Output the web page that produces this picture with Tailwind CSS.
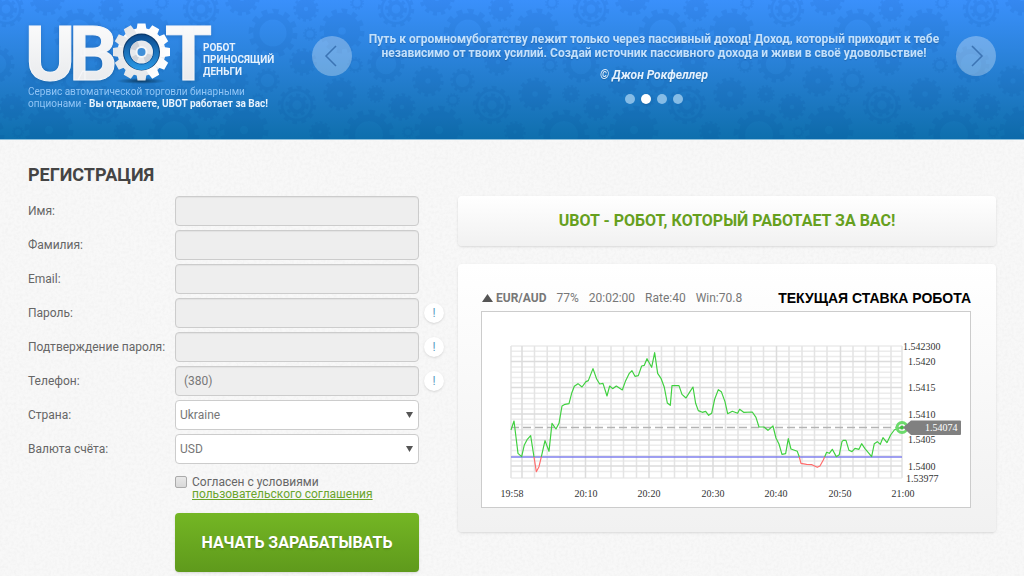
<!DOCTYPE html>
<html lang="ru">
<head>
<meta charset="utf-8">
<meta name="viewport" content="width=device-width, initial-scale=1">
<title>UBOT</title>
<script src="https://cdn.jsdelivr.net/npm/@tailwindcss/browser@4"></script>
</head>
<body class="relative min-h-screen overflow-x-hidden bg-[#f8f8f8] font-['Roboto','Noto_Sans',sans-serif] text-xs text-[#666]">

<!-- Paper texture -->
<svg class="absolute inset-0 -z-10 h-full w-full" aria-hidden="true">
  <filter id="paper"><feTurbulence type="fractalNoise" baseFrequency=".35" numOctaves="3" seed="4"/><feColorMatrix values="0 0 0 0 0.4  0 0 0 0 0.4  0 0 0 0 0.4  .14 0 0 0 -.05"/></filter>
  <rect width="100%" height="100%" filter="url(#paper)"/>
</svg>

<header class="relative flex h-[140px] items-start overflow-hidden border-b border-[#8fc0dc] bg-linear-to-b from-[#3a90fb] to-[#0e6fad] px-7 pt-5">
  <svg class="absolute top-0 left-0 h-[139px] w-[2145px]" viewBox="0 0 2145 139" aria-hidden="true">
    <defs>
      <symbol id="g-solid" viewBox="-12 -12 24 24"><path fill="#083f8c" fill-rule="evenodd" d="M-9.500 0a9.500 9.500 0 1 0 19 0a9.500 9.500 0 1 0-19 0zM-2 0a2 2 0 1 0 4 0a2 2 0 1 0-4 0z"/><circle r="10.500" fill="none" stroke="#083f8c" stroke-width="2.400" pathLength="24" stroke-dasharray="1"/></symbol>
      <symbol id="g-ring" viewBox="-12 -12 24 24"><circle r="8" fill="none" stroke="#083f8c" stroke-width="3"/><circle r="10.500" fill="none" stroke="#083f8c" stroke-width="2.400" pathLength="24" stroke-dasharray="1"/></symbol>
      <symbol id="g-double" viewBox="-12 -12 24 24"><circle r="9" fill="none" stroke="#083f8c" stroke-width="1.600"/><circle r="4" fill="none" stroke="#083f8c" stroke-width="2.400"/><circle r="6" fill="none" stroke="#083f8c" stroke-width="1.800" pathLength="16" stroke-dasharray="1"/><circle r="10.500" fill="none" stroke="#083f8c" stroke-width="2" pathLength="24" stroke-dasharray="1"/></symbol>
      <g id="gears">
        <use href="#g-double" x="377" y="-10" width="38" height="38"/>
        <use href="#g-double" x="472" y="85" width="40" height="40"/>
        <use href="#g-solid" x="293" y="-4" width="26" height="26"/>
        <use href="#g-solid" x="319" y="8" width="46" height="46"/>
        <use href="#g-solid" x="419" y="-20" width="36" height="36"/>
        <use href="#g-ring" x="443" y="8" width="50" height="50"/>
        <use href="#g-ring" x="303" y="27" width="14" height="14"/>
        <use href="#g-ring" x="367" y="45" width="38" height="38"/>
        <use href="#g-solid" x="412" y="65" width="32" height="32"/>
        <use href="#g-ring" x="450" y="68" width="25" height="25"/>
        <use href="#g-ring" x="347" y="57" width="16" height="16"/>
        <use href="#g-ring" x="446" y="93" width="14" height="14"/>
        <use href="#g-solid" x="323" y="77" width="34" height="34"/>
        <use href="#g-solid" x="367" y="85" width="18" height="18"/>
        <use href="#g-solid" x="388" y="93" width="28" height="28"/>
        <use href="#g-ring" x="343" y="109" width="52" height="52"/>
        <use href="#g-solid" x="414" y="105" width="50" height="50"/>
        <use href="#g-ring" x="402" y="126" width="12" height="12"/>
        <use href="#g-solid" x="309" y="121" width="22" height="22"/>
        <use href="#g-ring" x="350" y="-4" width="14" height="14"/>
        <use href="#g-solid" x="484" y="48" width="28" height="28"/>
      </g>
    </defs>
    <g opacity=".09">
      <use href="#gears" x="-390"/><use href="#gears" x="-195"/><use href="#gears"/><use href="#gears" x="195"/><use href="#gears" x="390"/><use href="#gears" x="585"/><use href="#gears" x="780"/><use href="#gears" x="975"/><use href="#gears" x="1170"/><use href="#gears" x="1365"/><use href="#gears" x="1560"/>
    </g>
  </svg>

  <a href="#" class="relative block w-[284px] shrink-0 leading-3 text-[#8fc4f5]">
    <svg class="block h-[66px] w-[250px] overflow-visible" viewBox="28 20 250 66" role="img" aria-label="UBOT — робот приносящий деньги">
      <defs>
        <linearGradient id="white" x2="0" y2="1"><stop stop-color="#fff"/><stop offset="1" stop-color="#e4e6e9"/></linearGradient>
        <linearGradient id="blue" x2="0" y2="1"><stop stop-color="#0c4c8f"/><stop offset="1" stop-color="#2c9be8"/></linearGradient>
        <radialGradient id="shade"><stop stop-color="#0a3558" stop-opacity=".9"/><stop offset="1" stop-color="#0a3558" stop-opacity="0"/></radialGradient>
      </defs>
      <g class="font-['Roboto',sans-serif] text-[76px] font-bold drop-shadow-sm" fill="url(#white)" stroke="#f6f7f9" stroke-width="1">
        <text x="25" y="80">U</text><text x="69" y="80">B</text><text x="165" y="80">T</text>
      </g>
      <ellipse cx="141" cy="81" rx="25" ry="3" fill="url(#shade)"/>
      <g transform="translate(141.500 52)">
        <g fill="url(#white)">
          <circle r="24"/>
          <path id="tooth" d="M-5-22L-4-28.500H4L5-22V22L4 28.500H-4L-5 22z"/><use href="#tooth" transform="rotate(30)"/><use href="#tooth" transform="rotate(60)"/><use href="#tooth" transform="rotate(90)"/><use href="#tooth" transform="rotate(120)"/><use href="#tooth" transform="rotate(150)"/>
        </g>
        <circle r="18.500" fill="#0b3c70"/><circle cy=".5" r="17.500" fill="url(#blue)"/>
        <circle r="12.500" fill="#0c569c"/><circle r="11.500" fill="#e6e9ed"/>
        <path d="M0 0L-11-3A11.500 11.500 0 0 1-4-10.800zM0 0L11 3A11.500 11.500 0 0 1 4 10.800zM0 0L-5 10A11.500 11.500 0 0 1-10 5z" fill="#cdd2d9"/>
        <circle r="6" fill="#f4f6f8"/><circle r="4" fill="#3f8fd8"/>
      </g>
      <g class="font-['Roboto',sans-serif] text-[10px] font-bold" fill="#e6f1fc"><text x="203" y="51">РОБОТ</text><text x="203" y="63">ПРИНОСЯЩИЙ</text><text x="203" y="75">ДЕНЬГИ</text></g>
    </svg>
    <span class="block text-[10px]">Сервис автоматической торговли бинарными<br>опционами - <b class="text-[#e8f3fd]">Вы отдыхаете, UBOT работает за Вас!</b></span>
  </a>

  <section class="relative flex grow items-start justify-between pt-4">
    <button type="button" aria-label="Назад" class="grid size-10 place-items-center rounded-full bg-white/30 text-[#3c74b4]"><svg class="size-6" viewBox="0 0 24 24" fill="none" stroke="currentColor" stroke-width="1.500"><path d="M16 2L6 12L16 22"/></svg></button>
    <div class="text-center leading-[14px] font-bold text-[#c3e0fb] text-shadow-xs">
      <p class="-mt-1">Путь к огромномубогатству лежит только через пассивный доход! Доход, который приходит к тебе<br>независимо от твоих усилий. Создай источник пассивного дохода и живи в своё удовольствие!</p>
      <p class="mt-2 text-[#e4f1fd] italic">© Джон Рокфеллер</p>
      <div class="mt-3 flex justify-center gap-1.5">
        <button type="button" aria-label="Цитата 1" class="size-2.5 rounded-full bg-[#86bce6]"></button>
        <button type="button" aria-label="Цитата 2" class="size-2.5 rounded-full bg-white shadow"></button>
        <button type="button" aria-label="Цитата 3" class="size-2.5 rounded-full bg-[#86bce6]"></button>
        <button type="button" aria-label="Цитата 4" class="size-2.5 rounded-full bg-[#86bce6]"></button>
      </div>
    </div>
    <button type="button" aria-label="Вперёд" class="grid size-10 place-items-center rounded-full bg-white/30 text-[#3c74b4]"><svg class="size-6" viewBox="0 0 24 24" fill="none" stroke="currentColor" stroke-width="1.500"><path d="M8 2L18 12L8 22"/></svg></button>
  </section>
</header>

<main class="flex items-start gap-3.5 px-7 pt-5">
  <form class="w-[416px] shrink-0">
    <h1 class="mb-2 pt-0.5 text-lg leading-[26px] font-bold text-[#444]">РЕГИСТРАЦИЯ</h1>
    <div class="grid grid-cols-[147px_244px_20px] items-center gap-y-1">
      <label for="name">Имя:</label><input id="name" class="h-[30px] rounded-sm border border-[#ccc] bg-[#eee] px-2 inset-shadow-xs"><span></span>
      <label for="surname">Фамилия:</label><input id="surname" class="h-[30px] rounded-sm border border-[#ccc] bg-[#eee] px-2 inset-shadow-xs"><span></span>
      <label for="email">Email:</label><input id="email" type="email" class="h-[30px] rounded-sm border border-[#ccc] bg-[#eee] px-2 inset-shadow-xs"><span></span>
      <label for="pass">Пароль:</label><input id="pass" type="password" class="h-[30px] rounded-sm border border-[#ccc] bg-[#eee] px-2 inset-shadow-xs"><button type="button" class="ml-[5px] size-5 rounded-full bg-white text-[#5aa0c4] shadow">!</button>
      <label for="pass2" class="whitespace-nowrap">Подтверждение пароля:</label><input id="pass2" type="password" class="h-[30px] rounded-sm border border-[#ccc] bg-[#eee] px-2 inset-shadow-xs"><button type="button" class="ml-[5px] size-5 rounded-full bg-white text-[#5aa0c4] shadow">!</button>
      <label for="phone">Телефон:</label><input id="phone" type="tel" value="(380)" class="h-[30px] rounded-sm border border-[#ccc] bg-[#eee] px-2 text-[#777] inset-shadow-xs"><button type="button" class="ml-[5px] size-5 rounded-full bg-white text-[#5aa0c4] shadow">!</button>
      <label for="country">Страна:</label>
      <div class="relative"><select id="country" class="block h-[30px] w-full appearance-none rounded-sm border border-[#ccc] bg-white px-1 text-[#777]"><option>Ukraine</option></select><svg class="pointer-events-none absolute top-3 right-1.5 h-1.5 w-[7px]" viewBox="0 0 7 6" fill="#555"><path d="M0 0H7L3.500 6z"/></svg></div><span></span>
      <label for="currency">Валюта счёта:</label>
      <div class="relative"><select id="currency" class="block h-[30px] w-full appearance-none rounded-sm border border-[#ccc] bg-white px-1 text-[#777]"><option>USD</option></select><svg class="pointer-events-none absolute top-3 right-1.5 h-1.5 w-[7px]" viewBox="0 0 7 6" fill="#555"><path d="M0 0H7L3.500 6z"/></svg></div><span></span>
    </div>
    <div class="ml-[147px] w-[244px]">
      <div class="mt-3 flex items-start gap-[5px] leading-3">
        <input id="agree" type="checkbox" class="size-3 appearance-none rounded-xs border border-[#aaa] bg-linear-to-b from-[#e8e8e8] to-[#d8d8d8]">
        <label for="agree">Согласен с условиями<br><a href="#" class="text-[#6aa52c] underline">пользовательского соглашения</a></label>
      </div>
      <button type="submit" class="mt-[13px] h-[59px] w-full rounded-sm bg-linear-to-b from-[#74b624] to-[#5f9a1c] text-base font-bold text-white shadow-sm text-shadow-sm">НАЧАТЬ ЗАРАБАТЫВАТЬ</button>
    </div>
  </form>

  <div class="mt-9 flex min-w-0 grow flex-col gap-[18px]">
    <h2 class="rounded-sm bg-linear-to-b from-white to-[#f1f1f1] py-[13px] text-center text-base leading-6 font-bold text-[#66a01e] shadow">UBOT - РОБОТ, КОТОРЫЙ РАБОТАЕТ ЗА ВАС!</h2>
    <section class="rounded-sm bg-linear-to-b from-white to-[#f1f1f1] pt-[25px] pr-[25px] pb-6 pl-[23px] shadow">
      <div class="flex items-center leading-[18px] text-[#777]">
        <svg class="mr-[3px] ml-px h-2 w-[11px]" viewBox="0 0 11 8" fill="#555"><path d="M5.500 0L11 8H0z"/></svg>
        <b>EUR/AUD</b><span class="ml-2.5">77%</span><span class="ml-2.5">20:02:00</span><span class="ml-2.5">Rate:40</span><span class="ml-2.5">Win:70.8</span>
        <h3 class="ml-auto font-['Liberation_Sans',Arial,sans-serif] text-sm leading-[18px] font-bold text-black">ТЕКУЩАЯ СТАВКА РОБОТА</h3>
      </div>
      <svg class="mt-1 block w-full border border-[#ccc] bg-white" viewBox="482 312 488 195" role="img" aria-label="График EUR/AUD">
        <g fill="none" stroke="#ececec" stroke-width="1.500">
          <path d="M511 346H902M511 351.300H902M511 356.600H902M511 367H902M511 372.300H902M511 377.500H902M511 382.700H902M511 393.200H902M511 398.500H902M511 403.700H902M511 408.900H902M511 419.300H902M511 424.500H902M511 429.700H902M511 434.900H902M511 445.300H902M511 450.500H902M511 455.700H902M511 461H902M511 471.500H902M511 478H902"/>
          <path stroke="#e4e4e4" d="M511 346V478M534.500 346V478M547.200 346V478M560 346V478M572.700 346V478M598 346V478M611 346V478M623.500 346V478M636.500 346V478M661.500 346V478M674.500 346V478M687 346V478M700 346V478M725.500 346V478M738 346V478M751 346V478M763.500 346V478M789 346V478M802 346V478M814.500 346V478M827 346V478M853 346V478M865.500 346V478M878.500 346V478M891 346V478M902 346V478"/>
          <path stroke="#dcdcdc" d="M511 361.500H902M511 387.500H902M511 414H902M511 440H902M511 466H902M522 346V478M585.500 346V478M649 346V478M713 346V478M776.500 346V478M840.500 346V478"/>
        </g>
        <path d="M511 427.500H902" stroke="#b4b4b4" stroke-width="1.500" stroke-dasharray="8 4"/>
        <path d="M511 457H902" stroke="#8080ee" stroke-width="1.500"/>
        <g transform="translate(475 310) scale(.3333)" fill="none" stroke-width="3.500" stroke-linejoin="round">
          <g stroke="#3fd03f">
            <polyline points="108,360 117,333 129,430 140,440 148,405 157,388 167,377 177,441"/>
            <polyline points="199,441 210,392 222,424 231,340 243,357 252,340 261,288 270,283 282,281 290,250 298,229 309,221 321,231 333,215 340,212 354,176 365,207 374,222 384,220 396,258 404,228 413,236 424,228 442,240 452,212 463,190 471,182 480,199 490,197 500,168 508,166 516,146 530,172 539,128 548,190 558,205 568,232 577,279 586,286 591,227 612,227 621,253 633,264 645,245 654,231 662,280 670,302 682,307 692,304 701,316 710,310 719,268 730,239 739,245 750,275 758,311 772,304 788,310 794,298 806,307 832,306 843,322 852,351 867,351 879,361 894,348 903,384 912,402 921,433 932,431 940,386 948,417 967,424 973,441"/>
            <polyline points="1049,441 1055,427 1063,430 1072,418 1084,440 1093,434 1101,395 1105,391 1113,391 1122,421 1131,425 1140,415 1152,418 1160,401 1170,416 1182,430 1190,440 1198,401 1207,395 1216,403 1224,383 1236,398 1247,375 1258,360 1265,356 1280,353"/>
          </g>
          <g stroke="#ff6b6b"><polyline points="177,441 184,485 192,470 199,441"/><polyline points="973,441 978,460 995,463 1011,464 1027,472 1035,468 1045,450 1049,441"/></g>
        </g>
        <circle cx="902" cy="427.500" r="5" fill="none" stroke="#6cdb6c" stroke-width="3"/><circle cx="902" cy="427.500" r="2" fill="#3fc03f"/>
        <path d="M903 427.500L911 420.500H960Q961 420.500 961 421.500V434Q961 435 960 435H911z" fill="#808080"/>
        <g class="font-['Liberation_Serif',serif] text-[10px]" fill="#333">
          <text x="903" y="350">1.542300</text><text x="908" y="365">1.5420</text><text x="908" y="391">1.5415</text><text x="908" y="418">1.5410</text><text x="908" y="443">1.5405</text><text x="908" y="470">1.5400</text><text x="906" y="482">1.53977</text>
          <text x="925" y="431" fill="#fff">1.54074</text>
          <g text-anchor="middle"><text x="512" y="497">19:58</text><text x="586" y="497">20:10</text><text x="649" y="497">20:20</text><text x="713" y="497">20:30</text><text x="776" y="497">20:40</text><text x="840" y="497">20:50</text><text x="903" y="497">21:00</text></g>
        </g>
      </svg>
    </section>
  </div>
</main>
</body>
</html>
